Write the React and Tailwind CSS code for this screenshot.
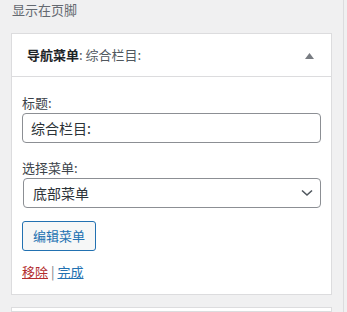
export default function App() {
  const font = { fontFamily: '"Noto Sans CJK SC", "Noto Sans", sans-serif' };
  return (
    <div className="w-[347px] h-[312px] bg-[#f0f0f1] overflow-hidden flex" style={font}>
      <div className="w-[343px] px-[11px] flex flex-col">
        <div className="text-[13px] leading-[20px] text-[#646970] pl-[1px]">显示在页脚</div>
        <div className="mt-[13px] bg-white border border-[#dcdcde]">
          <div className="h-[43px] border-b border-[#dcdcde] flex items-center pl-[15px] pr-[17px] justify-between">
            <div className="text-[13px] leading-[20px]">
              <span className="font-bold text-[#1d2327]">导航菜单</span>
              <span className="text-[#50575e]">: 综合栏目:</span>
            </div>
            <svg width="9" height="6" viewBox="0 0 9 6" className="mt-[1px]">
              <polygon points="4.5,0 9,6 0,6" fill="#787c82" />
            </svg>
          </div>
          <div className="pt-[17px] pb-[13px] px-[10px]">
            <div className="text-[13px] leading-[18px] text-[#3c434a]">标题:</div>
            <div className="mt-[1px] h-[30px] border border-[#8c8f94] rounded-[4px] flex items-center pl-[8px] text-[14px] text-[#2c3338]">
              综合栏目:
            </div>
            <div className="mt-[16px] text-[13px] leading-[18px] text-[#3c434a]">选择菜单:</div>
            <div className="mt-[1px] ml-[1px] h-[30px] border border-[#8c8f94] rounded-[4px] flex items-center justify-between pl-[9px] pr-[7px] text-[14px] text-[#2c3338]">
              <span>底部菜单</span>
              <svg width="12" height="8" viewBox="0 0 12 8">
                <polyline points="1,1.5 6,6 11,1.5" fill="none" stroke="#50575e" strokeWidth="1.6" />
              </svg>
            </div>
            <div className="mt-[13px] flex">
              <div className="h-[30px] w-[74px] border border-[#2271b1] rounded-[3px] bg-[#f6f7f7] text-[#2271b1] text-[13px] flex items-center justify-center">
                编辑菜单
              </div>
            </div>
            <div className="mt-[12px] text-[13px] leading-[18px] flex items-center">
              <span className="text-[#b32d2e] underline">移除</span>
              <span className="text-[#787c82] mx-[3px]">|</span>
              <span className="text-[#2271b1] underline">完成</span>
            </div>
          </div>
        </div>
        <div className="mt-[12px] bg-white border border-[#dcdcde] h-[40px]"></div>
      </div>
      <div className="w-[4px] border-l border-[#dcdcde]"></div>
    </div>
  );
}
